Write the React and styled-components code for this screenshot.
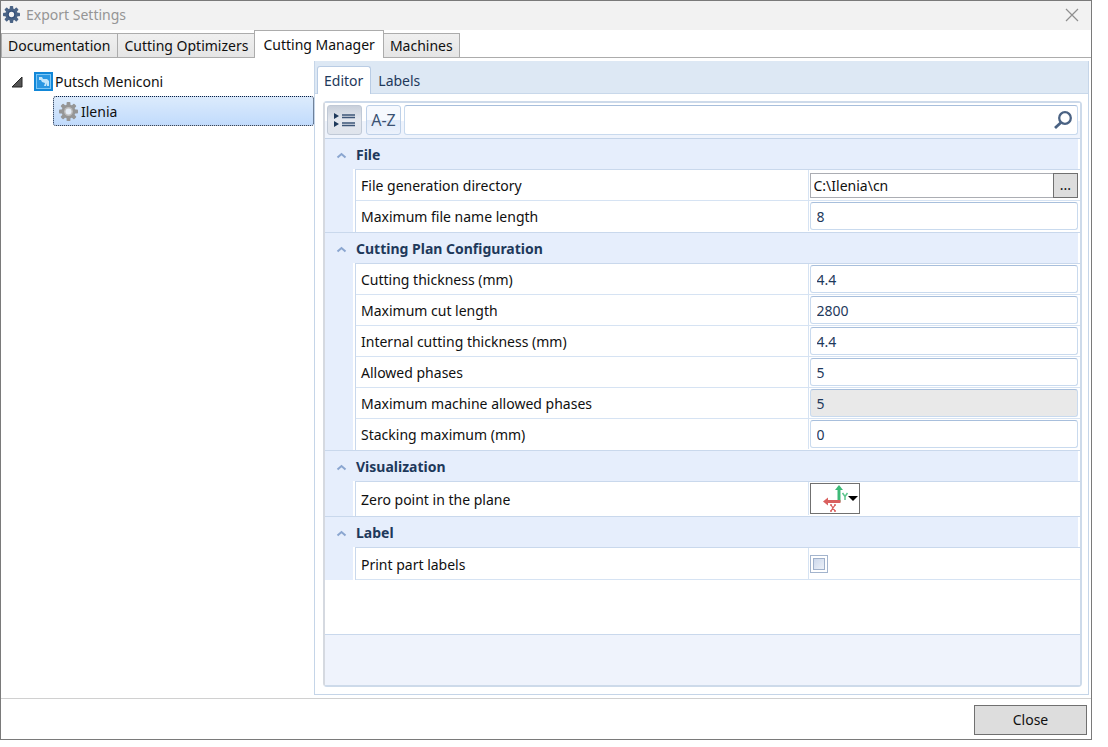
import React, { useState } from 'react'
import styled, { createGlobalStyle } from 'styled-components'

const GlobalStyle = createGlobalStyle`
    * {
        box-sizing: border-box;
    }
    body {
        margin: 0;
        background: #ffffff;
        color: #101010;
        font-family: "Noto Sans", "Open Sans", sans-serif;
        font-size: 14px;
        line-height: 20px;
    }
    button, input {
        font: inherit;
        color: inherit;
    }
`
const Page = styled.div`
    display: flex;
    min-height: 100vh;
    padding: 0 16px 7px 0;
`
const Window = styled.main`
    flex: 1;
    min-width: 0;
    display: flex;
    flex-direction: column;
    border: 1px solid #7a7a7a;
`
const TitleBar = styled.header`
    display: flex;
    align-items: center;
    height: 29px;
    padding: 0 12px 2px 2px;
    background: #f2f2f2;
    color: #959595;
    svg {
        display: block;
    }
`
const Title = styled.h1`
    flex: 1;
    margin: 0 0 0 6px;
    font-size: 14px;
    font-weight: 400;
`
const IconButton = styled.button`
    display: flex;
    padding: 0;
    border: 0;
    background: none;
`
const TabStrip = styled.nav`
    display: flex;
    align-items: flex-end;
    height: 28px;
    border-bottom: 1px solid #acacac;
`
const Tab = styled.button`
    height: ${({ $active }) => ($active ? '28px' : '24px')};
    margin: 0 0 ${({ $active }) => ($active ? '-1px' : '0')} ${({ $first }) => ($first ? '0' : '-1px')};
    padding: 0 ${({ $active }) => ($active ? '8px' : '6px')};
    border: 1px solid #acacac;
    border-bottom: 0;
    background: ${({ $active }) => ($active ? '#ffffff' : 'linear-gradient(#f0f0f0, #e5e5e5)')};
    line-height: 22px;
    white-space: nowrap;
    &:first-child {
        padding-right: 7px;
    }
`
const Content = styled.div`
    flex: 1;
    display: flex;
    padding: 3px 2px 3px 0;
`
const Tree = styled.ul`
    width: 313px;
    flex: none;
    margin: 0;
    padding: 5px 0 0;
    list-style: none;
    ul {
        margin: 0;
        padding: 0 0 0 52px;
        list-style: none;
    }
`
const TreeNode = styled.div`
    display: flex;
    align-items: center;
    gap: 2px;
    height: 30px;
    padding: 1px 0 0 10px;
`
const TreeLeaf = styled.button`
    display: flex;
    align-items: center;
    gap: 3px;
    width: 100%;
    height: 30px;
    padding: 1px 5px 0;
    border: 1px dotted #10203a;
    border-radius: 3px;
    background: linear-gradient(#dcebfc, #c1dbfc);
`
const Arrow = styled.svg`
    margin-right: 9px;
`
const Panel = styled.section`
    flex: 1;
    min-width: 0;
    display: flex;
    flex-direction: column;
    border: 1px solid #c5d5e8;
    border-top: 0;
`
const PanelTabs = styled.nav`
    display: flex;
    align-items: flex-end;
    height: 33px;
    padding-left: 2px;
    background: #dde8f4;
    border-bottom: 1px solid #c8d8ea;
`
const PanelTab = styled.button`
    height: 28px;
    margin-bottom: -1px;
    padding: 0 7px 0 6px;
    border: 1px solid ${({ $active }) => ($active ? '#b9cce4' : 'transparent')};
    border-bottom: 0;
    border-radius: 3px 3px 0 0;
    background: ${({ $active }) => ($active ? '#ffffff' : 'transparent')};
    color: #1e395b;
`
const PropertyGrid = styled.div`
    flex: 1;
    display: flex;
    flex-direction: column;
    margin: 7px 6px 7px 8px;
    border: 2px solid #cddaea;
    border-left-color: #d5d9e0;
    border-radius: 4px;
`
const Toolbar = styled.div`
    display: flex;
    height: 36px;
    padding: 2px 2px 3px;
    border-bottom: 1px solid #c3d3e8;
    background: linear-gradient(#ffffff 50%, #eef3fc 50%);
`
const ToolButton = styled.button`
    display: flex;
    align-items: center;
    justify-content: center;
    width: 35px;
    height: 30px;
    margin-right: ${({ $pressed }) => ($pressed ? '4px' : '3px')};
    padding: 0;
    border: 1px solid ${({ $pressed }) => ($pressed ? '#c0c9d6' : '#bdd0e8')};
    border-radius: 3px;
    background: ${({ $pressed }) => ($pressed
        ? 'linear-gradient(#c9d0db, #e3e7ee 50%, #dfe4ec)'
        : 'linear-gradient(#f6f9fe 50%, #dfe9f8 50%, #ecf2fc)')};
    color: #3a5172;
    font-size: 16px;
`
const SearchBox = styled.div`
    flex: 1;
    display: flex;
    align-items: center;
    height: 30px;
    padding-right: 5px;
    border: 1px solid #c9daee;
    border-top-color: #a8bfdc;
    border-radius: 3px;
    background: #ffffff;
    input {
        flex: 1;
        min-width: 0;
        padding: 0 6px;
        border: 0;
        outline: 0;
        background: none;
    }
`
const Group = styled.section`
    display: grid;
    grid-template-columns: 30px 1fr;
    border-bottom: ${({ $last }) => ($last ? '0' : '1px solid #c9d8ec')};
    background: linear-gradient(to right, #e6eefc 28px, #ffffff 28px);
`
const GroupHeader = styled.h2`
    grid-column: 1 / -1;
    display: flex;
    align-items: center;
    height: 30px;
    margin: 0 2px 0 0;
    padding-top: 2px;
    background: #e6eefc;
    color: #1e395b;
    font-size: 14px;
    font-weight: 700;
`
const Toggle = styled(IconButton)`
    width: 31px;
    padding-left: 11px;
`
const Rows = styled.div`
    grid-column: 2;
    border-top: 1px solid #c9d8ec;
    border-left: 1px solid #c9d8ec;
`
const rowHeights = { origin: '34px', check: '32px' }

const Row = styled.div`
    display: grid;
    grid-template-columns: 5fr 3fr;
    height: ${({ $type }) => rowHeights[$type] || '31px'};
    border-bottom: 1px solid #d6e3f3;
    &:last-child {
        border-bottom-color: ${({ $ruled }) => ($ruled ? '#d6e3f3' : 'transparent')};
    }
`
const RowLabel = styled.label`
    display: flex;
    align-items: center;
    padding: 2px 0 0 5px;
    border-right: 1px solid #d6e3f3;
`
const RowValue = styled.div`
    display: flex;
    align-items: center;
    padding: 0 2px 0 1px;
`
const TextField = styled.input`
    width: 100%;
    height: 28px;
    padding: 0 6px;
    border: 1px solid #c9daee;
    border-top-color: #a8bfdc;
    border-radius: 3px;
    background: #ffffff;
    color: #1e395b;
    &:disabled {
        background: #e9e9e9;
    }
`
const PathField = styled.input`
    flex: 1;
    min-width: 0;
    height: 25px;
    padding: 0 3px;
    border: 1px solid #abadb3;
    background: #ffffff;
`
const BrowseButton = styled.button`
    width: 25px;
    height: 25px;
    margin-left: -1px;
    padding: 0;
    border: 1px solid #707070;
    background: #dddddd;
`
const OriginButton = styled.button`
    display: flex;
    align-items: center;
    width: 50px;
    height: 31px;
    padding: 0;
    border: 1px solid #707070;
    background: #ffffff;
`
const Checkbox = styled.input`
    appearance: none;
    width: 18px;
    height: 18px;
    margin: 0;
    border: 1px solid #a3b4cd;
    background: linear-gradient(135deg, #c3d1e8, #f6f8fc);
    box-shadow: inset 0 0 0 2px #ffffff, inset 0 0 0 3px #9fb0ca;
    &:checked {
        background: #1e395b;
    }
`
const GridFooter = styled.div`
    height: 51px;
    margin-top: auto;
    border-top: 1px solid #c9d8ec;
    background: #eff3fc;
`
const Footer = styled.footer`
    display: flex;
    justify-content: flex-end;
    height: 41px;
    padding: 6px 4px 4px;
    border-top: 1px solid #d0d0d0;
`
const CloseButton = styled.button`
    width: 113px;
    height: 30px;
    border: 1px solid #707070;
    background: #dddddd;
`

const Gear = ({ size, color, hub, inner }) => (
    <svg width={size} height={size} viewBox="0 0 18 18">
        <g fill={color}>
            {[0, 45, 90, 135].map((angle) => (
                <rect key={angle} x="7.2" y="0" width="3.6" height="18" rx="0.8" transform={`rotate(${angle} 9 9)`} />
            ))}
            <circle cx="9" cy="9" r="6.6" />
        </g>
        <circle cx="9" cy="9" r="4.2" fill={inner} />
        <circle cx="9" cy="9" r="2.8" fill={hub} />
    </svg>
)

const groups = [
    {
        name: 'File',
        rows: [
            { id: 'directory', label: 'File generation directory', type: 'path', value: 'C:\\Ilenia\\cn' },
            { id: 'nameLength', label: 'Maximum file name length', value: '8' },
        ],
    },
    {
        name: 'Cutting Plan Configuration',
        rows: [
            { id: 'thickness', label: 'Cutting thickness (mm)', value: '4.4' },
            { id: 'cutLength', label: 'Maximum cut length', value: '2800' },
            { id: 'internal', label: 'Internal cutting thickness (mm)', value: '4.4' },
            { id: 'phases', label: 'Allowed phases', value: '5' },
            { id: 'maxPhases', label: 'Maximum machine allowed phases', value: '5', disabled: true },
            { id: 'stacking', label: 'Stacking maximum (mm)', value: '0' },
        ],
    },
    {
        name: 'Visualization',
        rows: [{ id: 'origin', label: 'Zero point in the plane', type: 'origin' }],
    },
    {
        name: 'Label',
        rows: [{ id: 'printLabels', label: 'Print part labels', type: 'check' }],
    },
]

const Field = ({ row }) => {
    if (row.type === 'path') {
        return (
            <>
                <PathField id={row.id} defaultValue={row.value} />
                <BrowseButton aria-label="Browse">...</BrowseButton>
            </>
        )
    }
    if (row.type === 'origin') {
        return (
            <OriginButton id={row.id}>
                <svg width="48" height="29" viewBox="0 0 48 29">
                    <path d="M28 18V5" stroke="#3dba78" strokeWidth="3" />
                    <path d="M24 6l4-5 4 5z" fill="#3dba78" />
                    <path d="M31.5 9l2.500 3.500 2.500-3.500M34 12.500v3.500" fill="none" stroke="#5cc58d" strokeWidth="1.500" />
                    <path d="M29.500 17.500H16" stroke="#d9605f" strokeWidth="3" />
                    <path d="M17 13.500l-5 4 5 4z" fill="#d9605f" />
                    <path d="M20 21l4 6M24 21l-4 6M19 21h2M23 21h2M19 27h2M23 27h2" stroke="#d9605f" strokeWidth="1.300" />
                    <path d="M37 12h10l-5 5z" fill="#000000" />
                </svg>
            </OriginButton>
        )
    }
    if (row.type === 'check') {
        return <Checkbox type="checkbox" id={row.id} />
    }
    return <TextField id={row.id} defaultValue={row.value} disabled={row.disabled} />
}

const PropertyGroup = ({ group, last }) => {
    const [open, setOpen] = useState(true)
    return (
        <Group $last={last}>
            <GroupHeader>
                <Toggle aria-label={`Toggle ${group.name}`} onClick={() => setOpen(!open)}>
                    <svg width="11" height="7" viewBox="0 0 11 7">
                        <path d="M1.500 5.500l4-3.500 4 3.500" fill="none" stroke="#8ba6d0" strokeWidth="2" />
                    </svg>
                </Toggle>
                {group.name}
            </GroupHeader>
            {open && (
                <Rows>
                    {group.rows.map((row) => (
                        <Row key={row.id} $type={row.type} $ruled={last}>
                            <RowLabel htmlFor={row.id}>{row.label}</RowLabel>
                            <RowValue>
                                <Field row={row} />
                            </RowValue>
                        </Row>
                    ))}
                </Rows>
            )}
        </Group>
    )
}

const tabs = ['Documentation', 'Cutting Optimizers', 'Cutting Manager', 'Machines']

const App = () => {
    return (
        <Page>
            <GlobalStyle />
            <Window>
                <TitleBar>
                    <Gear size={17} color="#4a6385" inner="#34507a" hub="#f2f2f2" />
                    <Title>Export Settings</Title>
                    <IconButton aria-label="Close window">
                        <svg width="14" height="14" viewBox="0 0 14 14">
                            <path d="M1 1l12 12M13 1L1 13" stroke="#8f8f8f" strokeWidth="1.200" />
                        </svg>
                    </IconButton>
                </TitleBar>

                <TabStrip>
                    {tabs.map((t, i) => (
                        <Tab key={t} $first={i === 0} $active={t === 'Cutting Manager'}>{t}</Tab>
                    ))}
                </TabStrip>

                <Content>
                    <Tree>
                        <li>
                            <TreeNode>
                                <Arrow width="12" height="12" viewBox="0 0 12 12">
                                    <path d="M11 1v10H1z" fill="#555555" stroke="#262626" />
                                </Arrow>
                                <svg width="19" height="19" viewBox="0 0 19 19">
                                    <rect width="19" height="19" fill="#1187d8" />
                                    <rect x="2.500" y="2.500" width="14" height="14" fill="#2a97e2" stroke="#7cc6f5" />
                                    <path d="M5 5h3l1 2h4l2 2v5h-2v-3l-1 3h-2l1-3-3-1-1-2H5z" fill="#c3e6fb" />
                                </svg>
                                Putsch Meniconi
                            </TreeNode>
                            <ul>
                                <li>
                                    <TreeLeaf>
                                        <Gear size={19} color="#969696" inner="#bdbdbd" hub="#e4ecf6" />
                                        Ilenia
                                    </TreeLeaf>
                                </li>
                            </ul>
                        </li>
                    </Tree>

                    <Panel>
                        <PanelTabs>
                            <PanelTab $active>Editor</PanelTab>
                            <PanelTab>Labels</PanelTab>
                        </PanelTabs>
                        <PropertyGrid>
                            <Toolbar>
                                <ToolButton $pressed aria-label="Group by category">
                                    <svg width="23" height="16" viewBox="0 0 23 16">
                                        <path d="M1 1l5 3-5 3zM1 9l5 3-5 3z" fill="#1e395b" />
                                        <path d="M9 3h13M9 5.500h13M9 11h13M9 13.500h13" stroke="#3d5677" strokeWidth="1.500" />
                                    </svg>
                                </ToolButton>
                                <ToolButton>A-Z</ToolButton>
                                <SearchBox>
                                    <input aria-label="Search" />
                                    <svg width="18" height="18" viewBox="0 0 18 18">
                                        <circle cx="11" cy="7" r="5.800" fill="none" stroke="#4a6283" strokeWidth="2.300" />
                                        <path d="M7 11.500l-6 5.500" stroke="#4a6283" strokeWidth="2.800" />
                                    </svg>
                                </SearchBox>
                            </Toolbar>
                            {groups.map((g, i) => (
                                <PropertyGroup key={g.name} group={g} last={i === groups.length - 1} />
                            ))}
                            <GridFooter />
                        </PropertyGrid>
                    </Panel>
                </Content>

                <Footer>
                    <CloseButton>Close</CloseButton>
                </Footer>
            </Window>
        </Page>
    )
}

export default App
